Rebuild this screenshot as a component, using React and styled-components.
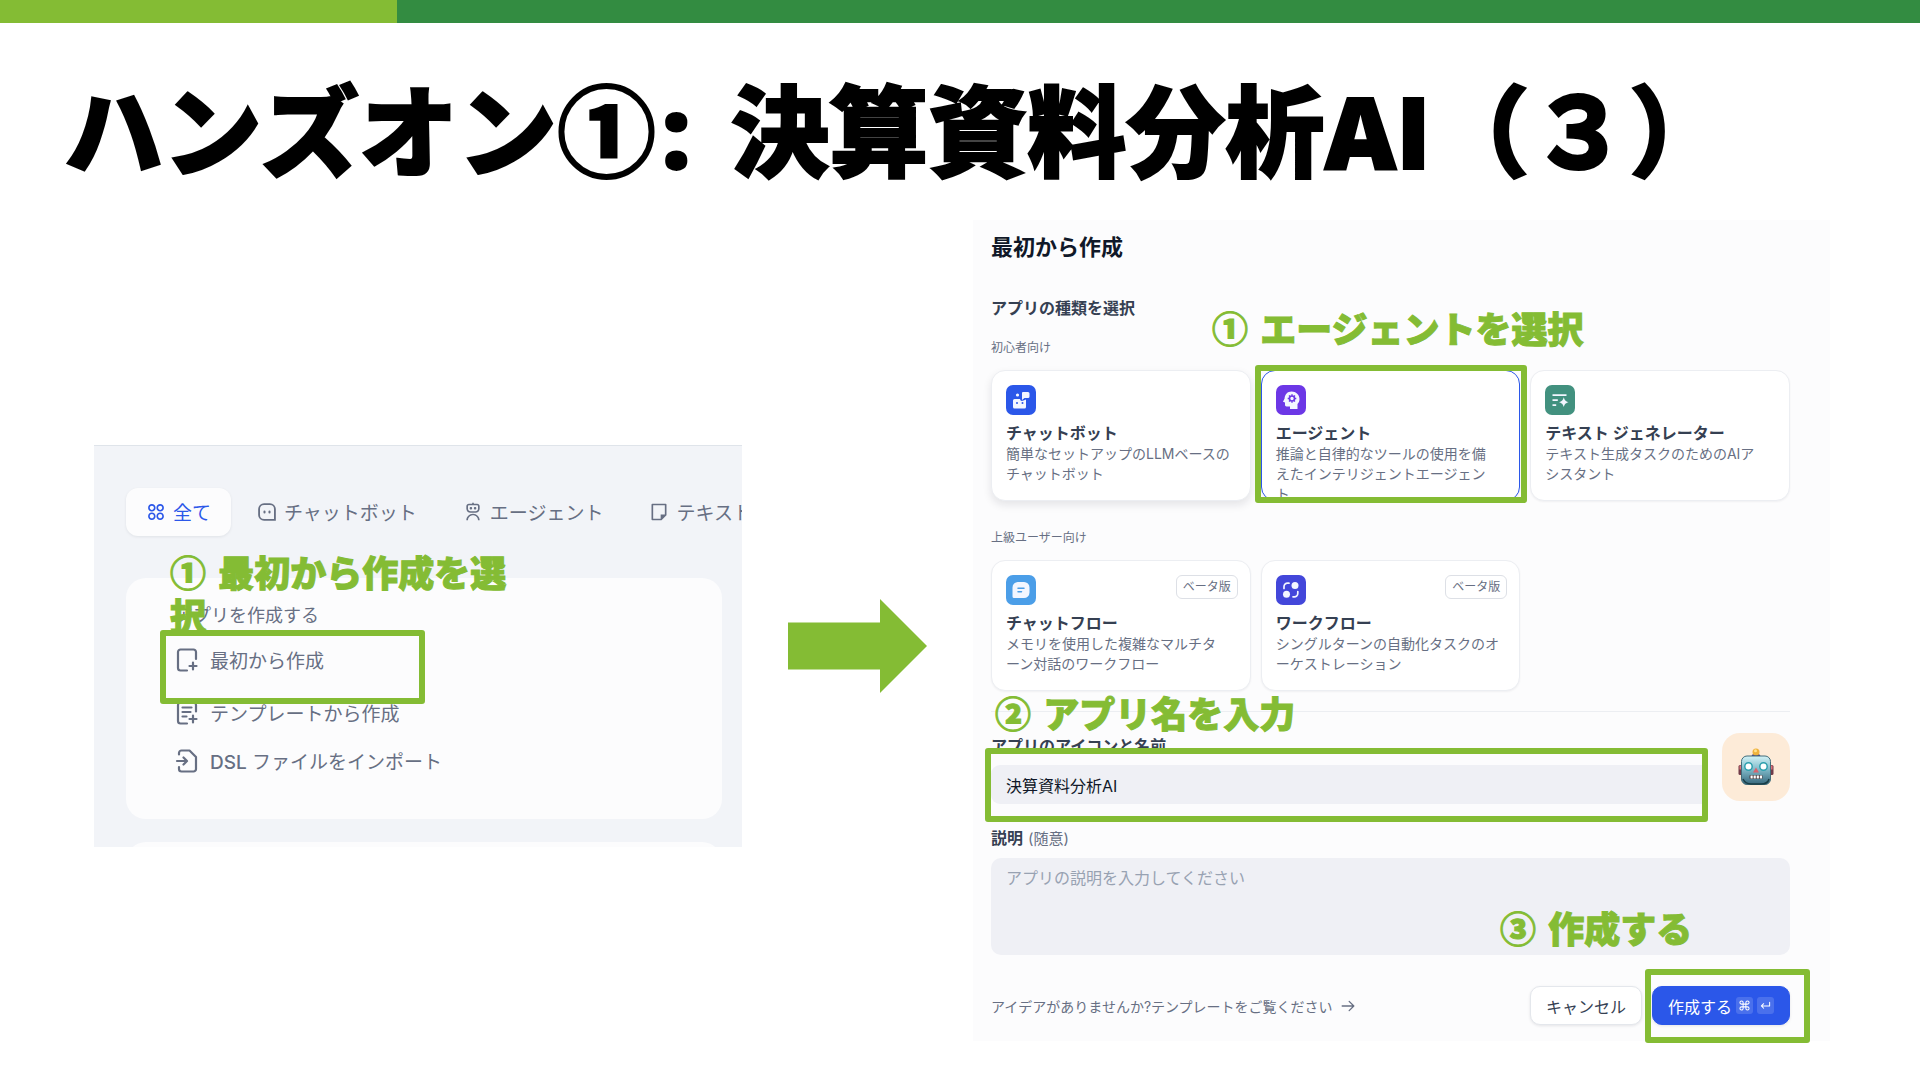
import React from 'react'
import styled, { createGlobalStyle, ThemeProvider } from 'styled-components'
import { RiApps2Line, RiFile4Line, RiRobot3Line } from 'react-icons/ri'

const theme = {
  colors: {
    lime: '#84bc34',
    green: '#338c41',
    blue: '#2b57e9',
    ink: '#101828',
    heading: '#354052',
    text: '#676f83',
    muted: '#98a2b2',
    field: '#eff0f5',
    panel: '#fcfcfd',
    line: '#eceef2'
  },
  fonts: {
    ui: "Inter, 'Noto Sans CJK JP', sans-serif",
    display: "'Noto Sans CJK JP', sans-serif",
    latin: "'Open Sans', 'Noto Sans CJK JP', sans-serif"
  }
}

const GlobalStyle = createGlobalStyle`
  *,
  *::before,
  *::after {
    box-sizing: border-box;
    margin: 0;
  }

  body {
    background-color: white;
    font-family: ${theme.fonts.ui};
    color: ${theme.colors.text};
  }

  button,
  input,
  textarea {
    font: inherit;
    color: inherit;
  }
`

const TopBar = styled.div`
  height: 23px;
  display: grid;
  grid-template-columns: 397fr 1523fr;
  background-color: ${props => props.theme.colors.green};

  span {
    background-color: ${props => props.theme.colors.lime};
  }
`

const Title = styled.h1`
  padding: 48px 64px 34px;
  font-family: ${props => props.theme.fonts.display};
  font-size: 99px;
  line-height: 110px;
  font-weight: 900;
  color: black;
  -webkit-text-stroke: 2px black;
`

const TitleLatin = styled.span`
  margin: ${props => (props.$spaced ? '0 14px 0 6px' : '0')};
  font-family: ${props => props.theme.fonts.latin};
  font-weight: 800;
`

const Main = styled.main`
  padding: 0 90px 38px 94px;
  display: grid;
  grid-template-columns: minmax(0, 648fr) 139px minmax(0, 857fr);
  column-gap: 46px;
  align-items: center;
`

const Lowered = styled.div`
  padding-top: 30px;

  svg {
    display: block;
  }
`

const Spot = styled.div`
  position: relative;
  display: flex;
  min-width: 0;

  > button,
  > input {
    flex: 1;
    min-width: 0;
  }
`

const Highlight = styled.span`
  position: absolute;
  z-index: 2;
  inset: ${props => props.$inset};
  width: ${props => props.$width || 'auto'};
  border: 6px solid ${props => props.theme.colors.lime};
  border-radius: 3px;
  pointer-events: none;
`

const Note = styled.p`
  position: absolute;
  z-index: 1;
  top: ${props => props.$top};
  left: ${props => props.$left};
  width: ${props => props.$width || 'max-content'};
  font-family: ${props => props.theme.fonts.display};
  font-size: 36px;
  line-height: 43px;
  font-weight: 900;
  color: ${props => props.theme.colors.lime};
  -webkit-text-stroke: 1px ${props => props.theme.colors.lime};
  pointer-events: none;

  span {
    margin-right: 4px;
  }
`

const StudioPanel = styled.section`
  position: relative;
  overflow: hidden;
  padding: 42px 20px 0 32px;
  background-color: #f2f4f8;
  border-top: 1px solid #dfe4ea;
`

const Tabs = styled.nav`
  display: flex;
  gap: 6px;
`

const Tab = styled.button`
  flex: none;
  height: 48px;
  padding: 0 20px;
  display: flex;
  align-items: center;
  gap: 7px;
  border: 0;
  border-radius: 12px;
  font-size: 19px;
  white-space: nowrap;
  color: ${props => (props.$active ? props.theme.colors.blue : props.theme.colors.text)};
  background-color: ${props => (props.$active ? props.theme.colors.panel : 'transparent')};
  box-shadow: ${props => (props.$active ? '0 1px 3px rgba(16, 24, 40, 0.08)' : 'none')};

  svg {
    width: 20px;
    height: 20px;
  }
`

const CreateCard = styled.div`
  margin-top: 42px;
  padding: 26px 49px 34px;
  border-radius: 20px;
  background-color: ${props => props.theme.colors.panel};

  h2 {
    margin-bottom: 8px;
    font-size: 18px;
    line-height: 24px;
    font-weight: 400;
  }

  ${Spot} {
    margin-bottom: 5px;
  }
`

const NextCard = styled.div`
  height: 40px;
  margin: 23px 0 -35px;
  border-radius: 20px;
  background-color: ${props => props.theme.colors.panel};
`

const CreateItem = styled.button`
  width: 100%;
  height: 48px;
  padding: 0;
  display: flex;
  align-items: center;
  gap: 11px;
  border: 0;
  background: none;
  font-size: 19px;

  svg {
    width: 24px;
    height: 24px;
  }

  b {
    font-weight: 500;
  }
`

const Dialog = styled.section`
  position: relative;
  padding: 12px 40px 16px 18px;
  background-color: ${props => props.theme.colors.panel};

  h2 {
    margin-bottom: 34px;
    font-size: 22px;
    line-height: 30px;
    font-weight: 700;
    color: ${props => props.theme.colors.ink};
  }
`

const labelText = `
  display: block;
  font-size: 16px;
  line-height: 24px;
  font-weight: 700;
  color: ${theme.colors.heading};
`

const SectionTitle = styled.h3`
  ${labelText}
`

const FieldLabel = styled.label`
  ${labelText}

  small {
    margin-left: 5px;
    font-size: 15px;
    font-weight: 400;
    color: ${props => props.theme.colors.text};
  }
`

const GroupLabel = styled.p`
  margin: ${props => props.$top} 0 14px;
  font-size: 12px;
  line-height: 16px;
`

const Cards = styled.div`
  display: grid;
  grid-template-columns: repeat(3, minmax(0, 1fr));
  gap: 10px;
`

const AppCard = styled.button`
  position: relative;
  height: 131px;
  padding: 14px 14px 0;
  display: flex;
  flex-direction: column;
  align-items: flex-start;
  overflow: hidden;
  text-align: left;
  background-color: white;
  border: 1px solid ${props => (props.$selected ? props.theme.colors.blue : props.theme.colors.line)};
  border-radius: 14px;
  box-shadow: ${props =>
    props.$raised ? '0 4px 8px rgba(16, 24, 40, 0.1)' : '0 1px 2px rgba(16, 24, 40, 0.05)'};

  > svg {
    flex: none;
    width: 30px;
    height: 30px;
  }

  strong {
    margin-top: 7px;
    font-size: 16px;
    line-height: 22px;
    font-weight: 700;
    color: ${props => props.theme.colors.heading};
  }

  p {
    font-size: 14px;
    line-height: 20px;
    white-space: pre;
  }
`

const Badge = styled.span`
  position: absolute;
  top: 14px;
  right: 12px;
  height: 24px;
  padding: 0 6px;
  border: 1px solid #dde0e6;
  border-radius: 6px;
  font-size: 12px;
  line-height: 22px;
`

const Divider = styled.hr`
  height: 1px;
  margin: 20px 0 21px;
  border: 0;
  background-color: ${props => props.theme.colors.line};
`

const NameRow = styled.div`
  margin-bottom: 22px;
  display: flex;
  align-items: flex-start;
  gap: 20px;
`

const NameField = styled.div`
  flex: 1;
  padding-top: 1px;

  ${Spot} {
    margin-top: 7px;
  }
`

const NameInput = styled.input`
  height: 39px;
  padding: 0 15px;
  border: 0;
  border-radius: 9px 0 0 9px;
  font-size: 16px;
  color: ${props => props.theme.colors.ink};
  background-color: ${props => props.theme.colors.field};
`

const IconPicker = styled.button`
  width: 68px;
  height: 68px;
  padding: 0;
  display: grid;
  place-items: center;
  border: 0;
  border-radius: 18px;
  background-color: #fdebd8;
`

const Description = styled.textarea`
  display: block;
  width: 100%;
  height: 97px;
  margin-top: 7px;
  padding: 8px 15px;
  resize: none;
  border: 0;
  border-radius: 10px;
  font-size: 16px;
  line-height: 24px;
  background-color: ${props => props.theme.colors.field};

  &::placeholder {
    color: ${props => props.theme.colors.muted};
  }
`

const Footer = styled.footer`
  margin-top: 31px;
  display: flex;
  align-items: center;
  gap: 10px;
`

const TemplateLink = styled.a`
  margin-right: auto;
  display: flex;
  align-items: center;
  gap: 8px;
  font-size: 14px;
  color: inherit;
  text-decoration: none;
`

const Button = styled.button`
  height: 39px;
  padding: 0 15px;
  display: flex;
  align-items: center;
  gap: 4px;
  font-size: 16px;
  white-space: nowrap;
  border: 1px solid ${props => (props.$primary ? props.theme.colors.blue : '#e4e7ec')};
  border-radius: 10px;
  color: ${props => (props.$primary ? 'white' : props.theme.colors.heading)};
  background-color: ${props => (props.$primary ? props.theme.colors.blue : 'white')};
  box-shadow: 0 1px 3px rgba(16, 24, 40, 0.1);

  kbd {
    width: 17px;
    height: 17px;
    display: grid;
    place-items: center;
    border-radius: 3px;
    background-color: rgba(255, 255, 255, 0.15);
  }

  svg {
    width: 11px;
    height: 11px;
  }
`

const stroke = {
  fill: 'none',
  stroke: 'currentColor',
  strokeWidth: 2.2,
  strokeLinecap: 'round',
  strokeLinejoin: 'round'
}

const ChatIcon = () => (
  <svg viewBox="0 0 24 24" {...stroke}>
    <path d="M8.500 2.500h7a6 6 0 0 1 6 6v13h-13a6 6 0 0 1-6-6v-7a6 6 0 0 1 6-6z" strokeLinejoin="miter" />
    <path d="M9 11.500v1M15 11.500v1" strokeWidth="2.500" />
  </svg>
)

const FilePlusIcon = () => (
  <svg viewBox="0 0 24 24" {...stroke}>
    <path d="M21 11V4a2.500 2.500 0 0 0-2.500-2.500h-13A2.500 2.500 0 0 0 3 4v16a2.500 2.500 0 0 0 2.500 2.500H12" />
    <path d="M18 14.500v7M14.500 18h7" />
  </svg>
)

const FileTextIcon = () => (
  <svg viewBox="0 0 24 24" {...stroke}>
    <path d="M21 10.500V4a2.500 2.500 0 0 0-2.500-2.500h-13A2.500 2.500 0 0 0 3 4v16a2.500 2.500 0 0 0 2.500 2.500H12" />
    <path d="M7.500 6.500h9M7.500 11h8M7.500 15.500h4M18 14.500v7M14.500 18h7" />
  </svg>
)

const FileImportIcon = () => (
  <svg viewBox="0 0 24 24" {...stroke}>
    <path d="M4 5.500V4a2.500 2.500 0 0 1 2.500-2.500h8L21 8v12a2.500 2.500 0 0 1-2.500 2.500h-12A2.500 2.500 0 0 1 4 20v-2" />
    <path d="M2 12h9.500M8.500 8.500l3.500 3.500-3.500 3.500" />
  </svg>
)

const Arrow = () => (
  <svg width="139" height="94" viewBox="0 0 139 94" fill={theme.colors.lime}>
    <path d="M0 23.500h92V0l47 47-47 47V70.500H0z" />
  </svg>
)

const Tile = ({ color, children }) => (
  <svg viewBox="0 0 30 30" fill="#f3f6ff">
    <rect width="30" height="30" rx="7" fill={color} />
    {children}
  </svg>
)

const ChatbotTile = () => (
  <Tile color="#2b57e9">
    <circle cx="11.500" cy="10" r="1.600" />
    <path d="M17 7h5a1.500 1.500 0 0 1 1.500 1.500v3A1.500 1.500 0 0 1 22 13h-3.500L16 15V8a1 1 0 0 1 1-1z" />
    <path d="M8.500 14H14c.5 2 1.500 2.500 3.500 1.500l2.500-1V22a1.500 1.500 0 0 1-1.500 1.500h-10A1.500 1.500 0 0 1 7 22v-6.500A1.500 1.500 0 0 1 8.500 14z" />
    <circle cx="11" cy="18" r="1" fill="#2b57e9" />
    <circle cx="16.500" cy="18" r="1" fill="#2b57e9" />
  </Tile>
)

const AgentTile = () => (
  <Tile color="#6c37e6">
    <path d="M15.500 6.500c4.500 0 8 3.200 8 7.500 0 2.300-.8 3.800-2 5v5h-7.500v-2.500h-3.500c-.8 0-1.500-.6-1.500-1.400V17.500L7 16.800l1.600-3.300c.2-4.200 3-7 6.900-7z" />
    <circle cx="16" cy="13.500" r="2.500" fill="none" stroke="#6c37e6" strokeWidth="1.600" />
    <path
      d="M16 9.200v1.600M16 16.200v1.600M11.700 13.500h1.600M18.700 13.500h1.600M13 10.500l1 1M18 15.500l1 1M13 16.500l1-1M18 11.500l1-1"
      stroke="#6c37e6"
      strokeWidth="1.400"
    />
  </Tile>
)

const TextTile = () => (
  <Tile color="#42917f">
    <path d="M7.500 9.200h14v1.800h-14zM7.500 14.300h5.300v1.700H7.500zM7.500 19.200h3.700v1.700H7.500z" />
    <path d="M18.800 12.300c.8 3 1.700 3.900 4.700 4.900-3 .9-3.900 1.800-4.700 4.900-.9-3.100-1.800-4-4.800-4.900 3-1 3.900-1.900 4.800-4.900z" />
  </Tile>
)

const ChatflowTile = () => (
  <Tile color="#4b9ee8">
    <path d="M12 7h6a5.500 5.500 0 0 1 5.500 5.500v5A5.500 5.500 0 0 1 18 23H8a1.500 1.500 0 0 1-1.500-1.500v-9A5.500 5.500 0 0 1 12 7z" />
    <path d="M12 13.300h6M12 16.700h3.500" stroke="#4b9ee8" strokeWidth="1.500" strokeLinecap="round" />
  </Tile>
)

const WorkflowTile = () => (
  <Tile color="#4347da">
    <circle cx="19" cy="10.500" r="3.500" />
    <circle cx="10.500" cy="19.300" r="3.500" />
    <path
      d="M13 8.200h-1.500A3.500 3.500 0 0 0 8 11.700v1.800M17 21.800h1.300a3.500 3.500 0 0 0 3.500-3.500v-1.800"
      fill="none"
      stroke="#f3f6ff"
      strokeWidth="1.700"
      strokeLinecap="round"
    />
  </Tile>
)

const RobotFace = () => (
  <svg width="36" height="38" viewBox="0 0 36 38">
    <defs>
      <linearGradient id="face" x1="0" y1="0" x2="0" y2="1">
        <stop offset="0" stopColor="#d3f3f7" />
        <stop offset="0.450" stopColor="#82bccb" />
        <stop offset="1" stopColor="#37677c" />
      </linearGradient>
    </defs>
    <rect x="0.500" y="17" width="4" height="10" rx="1.500" fill="#713b49" />
    <rect x="31.500" y="17" width="4" height="10" rx="1.500" fill="#713b49" />
    <path d="M1.500 17.500h2v4h-2zM32.500 17.500h2v4h-2z" fill="#dd7279" />
    <path d="M13.500 8.500c0-2 2-3 4.500-3s4.500 1 4.500 3z" fill="#4e4284" />
    <circle cx="18" cy="4" r="3.500" fill="#efb23d" />
    <circle cx="17.500" cy="2.800" r="1.500" fill="#ffe28a" />
    <rect x="3.500" y="8" width="29" height="28.500" rx="5.500" fill="url(#face)" stroke="#426d7b" />
    <path d="M5 31c2 4 5 5 8 5h10c4 0 7-1 8-5" fill="none" stroke="#183d46" strokeWidth="1.500" />
    <circle cx="10.500" cy="18.500" r="3.700" fill="#fff" stroke="#2d9fad" strokeWidth="1.500" />
    <circle cx="25.500" cy="18.500" r="3.700" fill="#fff" stroke="#2d9fad" strokeWidth="1.500" />
    <path d="M18 19.500l3 5h-6z" fill="#d7636d" />
    <rect x="11.500" y="27" width="13" height="4" rx="1" fill="#463c40" />
    <path d="M12.500 27.500h2.200v3h-2.200zM15.600 27.500h2.200v3h-2.200zM18.700 27.500h2.200v3h-2.200zM21.800 27.500H24v3h-2.200z" fill="#fff" />
  </svg>
)

const CommandIcon = () => (
  <svg viewBox="0 0 24 24" {...stroke}>
    <path d="M9 9h6v6H9zM9 9V5.500A3.500 3.500 0 1 0 5.500 9zM15 9h3.500A3.500 3.500 0 1 0 15 5.500zM15 15v3.500a3.500 3.500 0 1 0 3.500-3.500zM9 15H5.500A3.500 3.500 0 1 0 9 18.500z" />
  </svg>
)

const EnterIcon = () => (
  <svg viewBox="0 0 24 24" {...stroke}>
    <path d="M21 5v8H3M8 8l-5 5 5 5" />
  </svg>
)

const LinkArrow = () => (
  <svg width="14" height="14" viewBox="0 0 24 24" {...stroke}>
    <path d="M2 12h20M14 4l8 8-8 8" />
  </svg>
)

const Studio = () => (
  <StudioPanel>
    <Tabs>
      <Tab $active>
        <RiApps2Line />
        全て
      </Tab>
      <Tab>
        <ChatIcon />
        チャットボット
      </Tab>
      <Tab>
        <RiRobot3Line />
        エージェント
      </Tab>
      <Tab>
        <RiFile4Line />
        テキスト
      </Tab>
    </Tabs>
    <CreateCard>
      <h2>アプリを作成する</h2>
      <Spot>
        <CreateItem>
          <FilePlusIcon />
          最初から作成
        </CreateItem>
        <Highlight $inset="-6px auto -20px -15px" $width="265px" />
      </Spot>
      <CreateItem>
        <FileTextIcon />
        テンプレートから作成
      </CreateItem>
      <CreateItem>
        <FileImportIcon />
        <span>
          <b>DSL</b> ファイルをインポート
        </span>
      </CreateItem>
    </CreateCard>
    <NextCard />
    <Note $top="104px" $left="76px" $width="345px">
      <span>①</span> 最初から作成を選択
    </Note>
  </StudioPanel>
)

const CreateDialog = () => (
  <Dialog>
    <h2>最初から作成</h2>
    <SectionTitle>アプリの種類を選択</SectionTitle>
    <GroupLabel $top="20px">初心者向け</GroupLabel>
    <Cards>
      <AppCard $raised>
        <ChatbotTile />
        <strong>チャットボット</strong>
        <p>{'簡単なセットアップのLLMベースの\nチャットボット'}</p>
      </AppCard>
      <Spot>
        <AppCard $selected>
          <AgentTile />
          <strong>エージェント</strong>
          <p>{'推論と自律的なツールの使用を備\nえたインテリジェントエージェン\nト'}</p>
        </AppCard>
        <Highlight $inset="-5px -7px -2px -6px" />
      </Spot>
      <AppCard>
        <TextTile />
        <strong>テキスト ジェネレーター</strong>
        <p>{'テキスト生成タスクのためのAIア\nシスタント'}</p>
      </AppCard>
    </Cards>
    <GroupLabel $top="29px">上級ユーザー向け</GroupLabel>
    <Cards>
      <AppCard>
        <ChatflowTile />
        <Badge>ベータ版</Badge>
        <strong>チャットフロー</strong>
        <p>{'メモリを使用した複雑なマルチタ\nーン対話のワークフロー'}</p>
      </AppCard>
      <AppCard>
        <WorkflowTile />
        <Badge>ベータ版</Badge>
        <strong>ワークフロー</strong>
        <p>{'シングルターンの自動化タスクのオ\nーケストレーション'}</p>
      </AppCard>
    </Cards>
    <Divider />
    <NameRow>
      <NameField>
        <FieldLabel htmlFor="app-name">アプリのアイコンと名前</FieldLabel>
        <Spot>
          <NameInput id="app-name" defaultValue="決算資料分析AI" />
          <Highlight $inset="-17px -6px -18px -6px" />
        </Spot>
      </NameField>
      <IconPicker aria-label="アプリのアイコン">
        <RobotFace />
      </IconPicker>
    </NameRow>
    <FieldLabel htmlFor="app-description">
      説明<small>(随意)</small>
    </FieldLabel>
    <Description id="app-description" placeholder="アプリの説明を入力してください" />
    <Footer>
      <TemplateLink href="#templates">
        アイデアがありませんか?テンプレートをご覧ください
        <LinkArrow />
      </TemplateLink>
      <Button>キャンセル</Button>
      <Spot>
        <Button $primary>
          作成する
          <kbd>
            <CommandIcon />
          </kbd>
          <kbd>
            <EnterIcon />
          </kbd>
        </Button>
        <Highlight $inset="-17px -20px -18px -7px" />
      </Spot>
    </Footer>
    <Note $top="86px" $left="239px">
      <span>①</span> エージェントを選択
    </Note>
    <Note $top="471px" $left="22px">
      <span>②</span> アプリ名を入力
    </Note>
    <Note $top="686px" $left="527px">
      <span>③</span> 作成する
    </Note>
  </Dialog>
)

const App = () => (
  <ThemeProvider theme={theme}>
    <GlobalStyle />
    <TopBar>
      <span />
    </TopBar>
    <Title>
      ハンズオン①<TitleLatin $spaced>: </TitleLatin>決算資料分析<TitleLatin>AI</TitleLatin>（３）
    </Title>
    <Main>
      <Lowered>
        <Studio />
      </Lowered>
      <Lowered>
        <Arrow />
      </Lowered>
      <CreateDialog />
    </Main>
  </ThemeProvider>
)

export default App
